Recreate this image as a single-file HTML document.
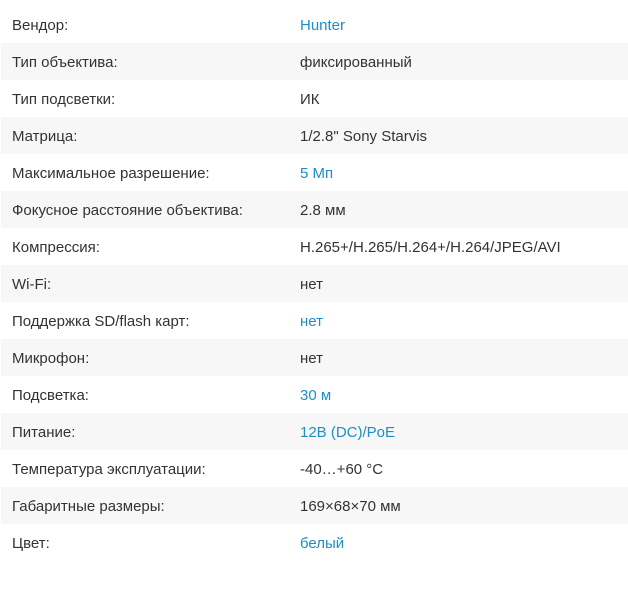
<!DOCTYPE html>
<html><head><meta charset="utf-8"><style>
body{margin:0;background:#fff;font-family:"Liberation Sans",sans-serif;font-size:15px;color:#333}
table{position:absolute;top:6px;left:1px;width:627px;border-collapse:collapse}
td{height:37px;padding:2px 0 0 0;box-sizing:border-box;vertical-align:middle}
td:first-child{padding-left:11px;width:299px}
tr:nth-child(even){background:#f7f7f7}
.l{color:#1d8ec6}
</style></head><body>
<table>
<tr><td>Вендор:</td><td class="l">Hunter</td></tr>
<tr><td>Тип объектива:</td><td>фиксированный</td></tr>
<tr><td>Тип подсветки:</td><td>ИК</td></tr>
<tr><td>Матрица:</td><td>1/2.8" Sony Starvis</td></tr>
<tr><td>Максимальное разрешение:</td><td class="l">5 Мп</td></tr>
<tr><td>Фокусное расстояние объектива:</td><td>2.8 мм</td></tr>
<tr><td>Компрессия:</td><td>H.265+/H.265/H.264+/H.264/JPEG/AVI</td></tr>
<tr><td>Wi-Fi:</td><td>нет</td></tr>
<tr><td>Поддержка SD/flash карт:</td><td class="l">нет</td></tr>
<tr><td>Микрофон:</td><td>нет</td></tr>
<tr><td>Подсветка:</td><td class="l">30 м</td></tr>
<tr><td>Питание:</td><td class="l">12В (DC)/PoE</td></tr>
<tr><td>Температура эксплуатации:</td><td>-40…+60 °C</td></tr>
<tr><td>Габаритные размеры:</td><td>169×68×70 мм</td></tr>
<tr><td>Цвет:</td><td class="l">белый</td></tr>
</table>
</body></html>
